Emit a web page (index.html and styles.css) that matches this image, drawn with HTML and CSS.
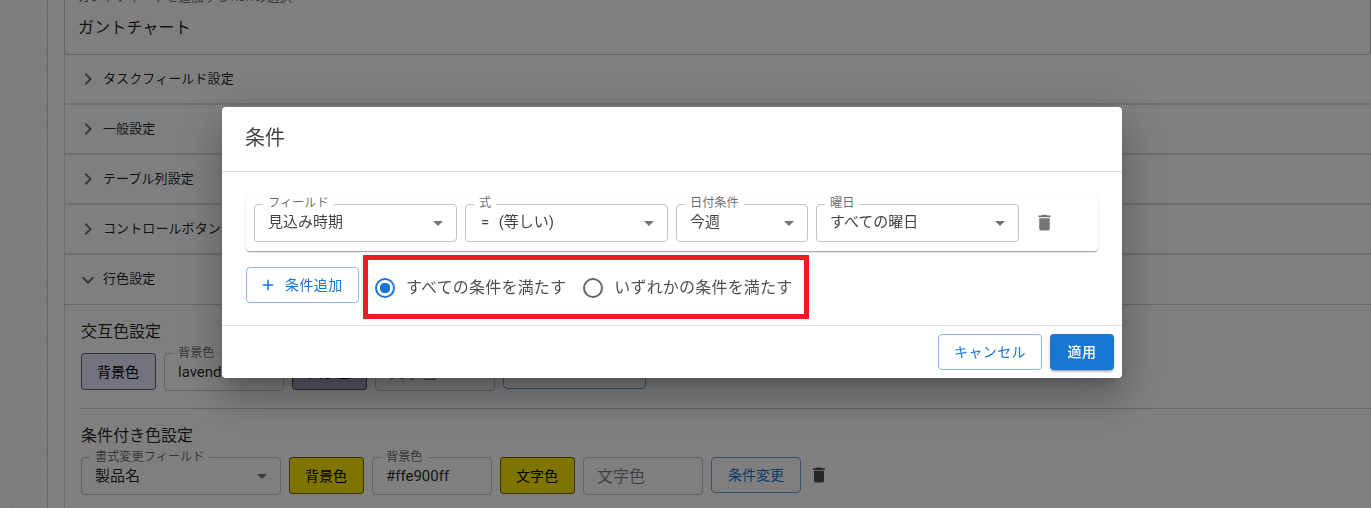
FILE: index.html
```html
<!DOCTYPE html>
<html lang="ja">
<head>
<meta charset="utf-8">
<title>条件</title>
<link rel="stylesheet" href="styles.css">
</head>
<body>
<div class="page">
  <div class="rail"></div>
  <div class="gutter"></div>
  <main class="main">
    <div class="view-box">
      <span class="legend">ガントチャートを追加するviewの選択</span>
      <span class="view-value">ガントチャート</span>
    </div>
    <div class="acc"><svg class="chev" viewBox="0 0 24 24"><path d="M10 6 8.59 7.41 13.17 12l-4.58 4.59L10 18l6-6z"/></svg><span class="acc-text">タスクフィールド設定</span></div>
    <div class="acc"><svg class="chev" viewBox="0 0 24 24"><path d="M10 6 8.59 7.41 13.17 12l-4.58 4.59L10 18l6-6z"/></svg><span class="acc-text">一般設定</span></div>
    <div class="acc"><svg class="chev" viewBox="0 0 24 24"><path d="M10 6 8.59 7.41 13.17 12l-4.58 4.59L10 18l6-6z"/></svg><span class="acc-text">テーブル列設定</span></div>
    <div class="acc"><svg class="chev" viewBox="0 0 24 24"><path d="M10 6 8.59 7.41 13.17 12l-4.58 4.59L10 18l6-6z"/></svg><span class="acc-text">コントロールボタン設定</span></div>
    <div class="acc acc-open"><svg class="chev" viewBox="0 0 24 24"><path d="M16.59 8.59 12 13.17 7.41 8.59 6 10l6 6 6-6z"/></svg><span class="acc-text">行色設定</span></div>
    <section class="panel">
      <h3 class="sub sub-first">交互色設定</h3>
      <div class="row">
        <button class="cbtn lav">背景色</button>
        <div class="tf w120"><span class="legend">背景色</span><span class="val">lavender</span></div>
        <button class="cbtn dark">文字色</button>
        <div class="tf w120"><span class="legend">文字色</span><span class="val ph">文字色</span></div>
        <button class="obtn w143"><svg class="obtn-icon" viewBox="0 0 24 24"><path d="M19 13h-6v6h-2v-6H5v-2h6V5h2v6h6v2z"/></svg>条件変更</button>
      </div>
      <hr class="div">
      <h3 class="sub">条件付き色設定</h3>
      <div class="row">
        <div class="tf w200"><span class="legend">書式変更フィールド</span><span class="val">製品名</span><i class="caret"></i></div>
        <button class="cbtn yel">背景色</button>
        <div class="tf w120"><span class="legend">背景色</span><span class="val">#ffe900ff</span></div>
        <button class="cbtn yel">文字色</button>
        <div class="tf w120"><span class="val ph">文字色</span></div>
        <button class="obtn w90">条件変更</button>
        <svg class="trash trash-bg" viewBox="0 0 24 24"><path d="M6 19c0 1.1.9 2 2 2h8c1.1 0 2-.9 2-2V7H6v12zM19 4h-3.5l-1-1h-5l-1 1H5v2h14V4z"/></svg>
      </div>
    </section>
  </main>
</div>

<div class="scrim"></div>

<div class="dialog" role="dialog">
  <header class="d-title">条件</header>
  <div class="d-content">
    <div class="cond">
      <div class="sel s203"><span class="legend">フィールド</span><span class="val">見込み時期</span><i class="caret"></i></div>
      <div class="sel s203"><span class="legend">式</span><span class="val val-eq">=&nbsp;&nbsp;(等しい)</span><i class="caret"></i></div>
      <div class="sel s132"><span class="legend">日付条件</span><span class="val">今週</span><i class="caret"></i></div>
      <div class="sel s203"><span class="legend">曜日</span><span class="val">すべての曜日</span><i class="caret"></i></div>
      <svg class="trash" viewBox="0 0 24 24"><path d="M6 19c0 1.1.9 2 2 2h8c1.1 0 2-.9 2-2V7H6v12zM19 4h-3.5l-1-1h-5l-1 1H5v2h14V4z"/></svg>
    </div>
    <div class="actions">
      <button class="add"><svg class="plus" viewBox="0 0 24 24"><path d="M19 13h-6v6h-2v-6H5v-2h6V5h2v6h6v2z"/></svg>条件追加</button>
      <div class="radios">
        <label class="radio"><span class="dot on"></span>すべての条件を満たす</label>
        <label class="radio"><span class="dot"></span>いずれかの条件を満たす</label>
      </div>
    </div>
  </div>
  <footer class="d-foot">
    <button class="cancel">キャンセル</button>
    <button class="apply">適用</button>
  </footer>
  <div class="red"></div>
</div>
</body>
</html>
```
FILE: styles.css
```css
* { box-sizing: border-box; }
html, body { margin: 0; height: 508px; overflow: hidden; }
body { font-family: Roboto, "Noto Sans CJK JP", sans-serif; color: rgba(0,0,0,.87); background: #fff; }
button { font-family: inherit; margin: 0; cursor: pointer; }

.page { display: flex; height: 508px; overflow: hidden; }
.rail { width: 48px; flex: none; border-right: 1px solid #ccc;
  background: repeating-linear-gradient(135deg, #fff 0 2px, #f8f8f8 2px 4px); }
.gutter { width: 16px; flex: none; background: #fff; }
.main { flex: 1; min-width: 0; border-left: 1px solid #ddd; margin-top: -6px; }

.view-box { position: relative; height: 61px; border: 1px solid #c4c4c4; border-radius: 4px;
  margin-left: -1px; padding: 21px 12px 0 13px; font-size: 16px; line-height: 24px; letter-spacing: .15px; }
.view-box .legend { left: 13px; top: -5px; padding: 0; background: none; font-size: 12.6px; line-height: 14px; letter-spacing: 0; }
.view-value { display: block; }

.acc { height: 50px; display: flex; align-items: center; padding-left: 11px; font-size: 13px;
  color: rgba(0,0,0,.87); border-bottom: 2px solid #ddd; }
.acc-open { border-bottom: 1px solid #ccc; }
.acc-text { padding-bottom: 4px; letter-spacing: .1px; }
.chev { width: 24px; height: 24px; fill: rgba(0,0,0,.55); margin: 0 3px 0 0; flex: none; }

.panel { padding: 0 16px; }
.sub { margin: 0; font-size: 16px; font-weight: 400; line-height: 24px; padding-top: 15px; padding-bottom: 9px; }
.row { display: flex; gap: 8px; align-items: flex-start; }
.div { border: 0; border-top: 1px solid #ccc; margin: 17px -64px 0 0; height: 0; }

.cbtn { width: 75px; height: 37px; font-size: 14px; border-radius: 4px; border: 1px solid rgba(0,0,0,.55); color: #000; padding: 0 1px 2px 0; }
.lav { background: #e6e6fa; }
.dark { background: #b4b4d0; }
.yel { background: #ffe900; }
.obtn { height: 36px; border-radius: 4px; border: 1px solid #6a9fd8; background: #fff; color: #1976d2; font-size: 14px; padding: 0 0 2px; }
.obtn-icon { width: 18px; height: 18px; fill: #1976d2; margin-right: 8px; vertical-align: middle; }
.w143 { width: 143px; }
.w90 { width: 90px; }

.tf { position: relative; height: 38px; border: 1px solid #c4c4c4; border-radius: 4px; display: flex; align-items: center; padding-left: 13px; font-size: 15px; line-height: 22px; }
.tf .legend { top: -8px; }
.w120 { width: 120px; }
.w200 { width: 200px; }
.ph { color: rgba(0,0,0,.5); font-size: 16px; position: relative; top: 1px; }
.legend { position: absolute; top: -9px; left: 8px; padding: 0 5px; background: #fff; font-size: 12.2px; line-height: 14px; color: rgba(0,0,0,.6); white-space: nowrap; }
.caret { position: absolute; right: 13px; top: 16px; width: 0; height: 0; border: 5px solid transparent; border-top-color: rgba(0,0,0,.54); border-bottom: 0; }
.trash { width: 20px; height: 20px; fill: rgba(0,0,0,.54); flex: none; }
.trash-bg { margin-top: 8px; fill: rgba(0,0,0,.7); }

.scrim { position: fixed; inset: 0; background: rgba(0,0,0,.5); }

.dialog { position: fixed; left: 222px; top: 107px; width: 900px; height: 271px; background: #fff; border-radius: 4px;
  display: flex; flex-direction: column;
  box-shadow: 0 11px 15px -7px rgba(0,0,0,.2), 0 24px 38px 3px rgba(0,0,0,.14), 0 9px 46px 8px rgba(0,0,0,.12); }
.d-title { height: 65px; flex: none; padding: 0 24px 0 23px; font-size: 20px; line-height: 62px; border-bottom: 1px solid #e0e0e0; color: rgba(0,0,0,.75); }
.d-content { flex: 1; padding: 23px 24px 0; }
.cond { height: 56px; display: flex; align-items: flex-start; gap: 8px; padding: 9px 8px; border-radius: 4px;
  box-shadow: 0 2px 1px -1px rgba(0,0,0,.2), 0 1px 1px 0 rgba(0,0,0,.14), 0 1px 3px 0 rgba(0,0,0,.12); }
.sel { position: relative; height: 38px; border: 1px solid #c4c4c4; border-radius: 4px; padding-left: 13px; font-size: 15px; line-height: 35px; color: rgba(0,0,0,.75); }
.val-eq { padding-left: 2px; word-spacing: 1px; }
.s203 { width: 203px; }
.s132 { width: 132px; }
.cond .trash { margin: 8px 0 0 7px; width: 21px; height: 21px; }

.actions { display: flex; margin-top: 16px; align-items: flex-start; }
.add { width: 113px; height: 36px; flex: none; display: flex; align-items: center; padding: 0 0 0 12px; border: 1px solid #8dbbe9; border-radius: 4px; background: #fff; color: #1976d2; font-size: 14px; letter-spacing: .4px; line-height: 30px; }
.plus { width: 18px; height: 18px; fill: #1976d2; margin-right: 8px; margin-top: -1px; }
.radios { display: flex; margin: 0 0 0 16px; padding-top: 8px; gap: 17px; font-size: 16px; line-height: 25px; letter-spacing: .2px; color: rgba(0,0,0,.7); }
.radio { display: flex; align-items: center; gap: 11px; }
.dot { width: 20px; height: 20px; border-radius: 50%; border: 2px solid #666; flex: none; }
.dot.on { border-color: #1976d2; background: radial-gradient(circle, #1976d2 0 5px, #fff 5.5px); }

.d-foot { height: 53px; flex: none; border-top: 1px solid #e0e0e0; display: flex; justify-content: flex-end; gap: 8px; padding: 8px; }
.cancel { width: 104px; height: 36px; border: 1px solid #8dbbe9; border-radius: 4px; background: #fff; color: #1976d2; font-size: 14px; letter-spacing: .4px; padding: 0 0 2px; }
.apply { width: 64px; height: 36px; border: 0; border-radius: 4px; background: #1976d2; color: #fff; font-size: 14px; font-weight: 500; letter-spacing: .4px; padding: 0 0 2px;
  box-shadow: 0 3px 1px -2px rgba(0,0,0,.2), 0 2px 2px 0 rgba(0,0,0,.14), 0 1px 5px 0 rgba(0,0,0,.12); }

.red { position: absolute; left: 141px; top: 148px; width: 446px; height: 64px; border: 5px solid #ed1c24; }
```
